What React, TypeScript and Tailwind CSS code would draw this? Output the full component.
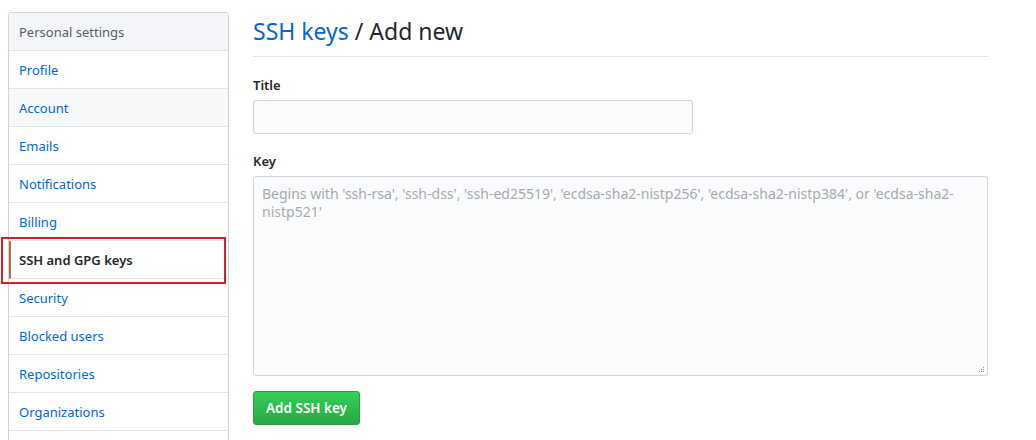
const nav = [
    "Profile",
    "Account",
    "Emails",
    "Notifications",
    "Billing",
    "SSH and GPG keys",
    "Security",
    "Blocked users",
    "Repositories",
    "Organizations",
];

export default function App() {
    return (
        <div className="flex h-[440px] w-[1036px] gap-[24px] overflow-hidden bg-white pl-[8px] pt-[12px] font-['Segoe_UI','Noto_Sans',sans-serif] text-[14px] text-[#24292e]">
            {/* sidebar menu */}
            <div className="relative w-[221px] shrink-0">
                <div className="rounded-t-[3px] border border-[#d1d5da]">
                    <div className="flex h-[38px] items-center border-b border-[#e1e4e8] bg-[#f3f5f8] px-[10px] pt-[2px] text-[13px] text-[#586069]">
                        Personal settings
                    </div>
                    {nav.map((item) => {
                        const selected = item === "SSH and GPG keys";
                        return (
                            <div
                                key={item}
                                className={
                                    selected
                                        ? "flex h-[38px] items-center border-b border-l-2 border-b-[#e1e4e8] border-l-[#b0743a] bg-white pl-[8px] pt-[2px] text-[13px] font-semibold text-[#24292e]"
                                        : item === "Account"
                                          ? "flex h-[38px] items-center border-b border-[#e1e4e8] bg-[#f6f8fa] px-[10px] pt-[2px] text-[13px] text-[#0366d6]"
                                          : "flex h-[38px] items-center border-b border-[#e1e4e8] bg-white px-[10px] pt-[2px] text-[13px] text-[#0366d6]"
                                }
                            >
                                {item}
                            </div>
                        );
                    })}
                    <div className="h-[38px] bg-white" />
                </div>
                {/* red annotation box around the selected item */}
                <div className="absolute left-[-7px] top-[225px] h-[47px] w-[225px] border-2 border-[#d3202c]" />
            </div>

            {/* main column */}
            <div className="w-[735px] shrink-0">
                <h2 className="border-b border-[#e1e4e8] pb-[8px] pt-[2px] text-[23px] leading-[34px] font-normal">
                    <a className="text-[#0366d6]">SSH keys</a> / Add new
                </h2>
                <div className="mt-[17px]">
                    <label className="block text-[13px] font-semibold leading-[22px]">Title</label>
                    <div className="mt-[4px] h-[34px] w-[440px] rounded-[3px] border border-[#d1d5da] bg-[#fafbfc]" />
                </div>
                <div className="mt-[16px]">
                    <label className="block text-[13px] font-semibold leading-[22px]">Key</label>
                    <div className="relative mt-[4px] h-[200px] w-[735px] rounded-[3px] border border-[#d1d5da] bg-[#fafbfc] px-[8px] py-[8px] text-[14px] leading-[18px] text-[#a8abae]">
                        Begins with 'ssh-rsa', 'ssh-dss', 'ssh-ed25519', 'ecdsa-sha2-nistp256', 'ecdsa-sha2-nistp384', or 'ecdsa-sha2-nistp521'
                        <svg className="absolute bottom-[2px] right-[2px]" width="7" height="7" viewBox="0 0 7 7">
                            <g fill="#9a9a9a">
                                <rect x="5" y="1" width="1" height="1" />
                                <rect x="3" y="3" width="1" height="1" />
                                <rect x="5" y="3" width="1" height="1" />
                                <rect x="1" y="5" width="1" height="1" />
                                <rect x="3" y="5" width="1" height="1" />
                                <rect x="5" y="5" width="1" height="1" />
                            </g>
                        </svg>
                    </div>
                </div>
                <button className="mt-[15px] block h-[34px] rounded-[3px] border border-[#2a9c44] bg-gradient-to-b from-[#34d058] to-[#28a745] px-[12px] text-[13.5px] font-semibold text-white">
                    Add SSH key
                </button>
            </div>
        </div>
    );
}
